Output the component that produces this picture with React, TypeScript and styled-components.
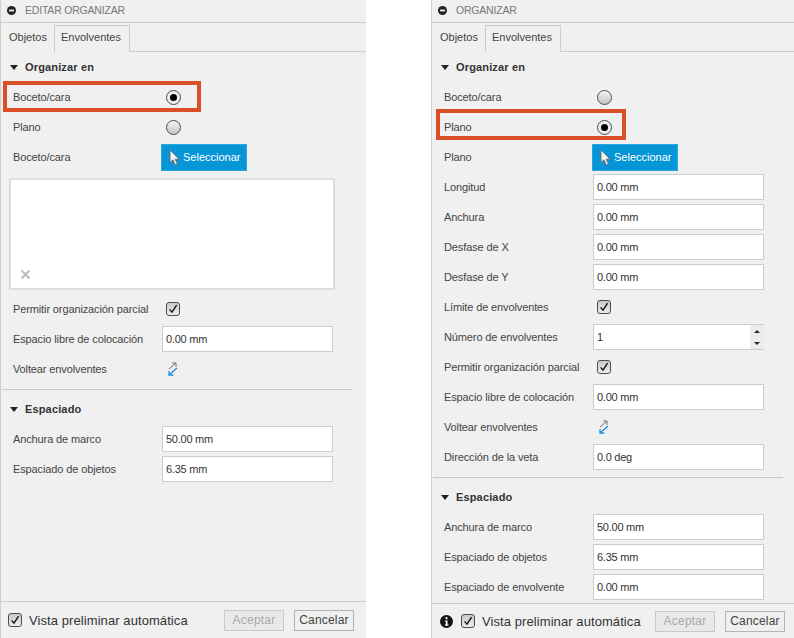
import React from 'react';
import styled, { createGlobalStyle } from 'styled-components';

const GlobalStyle = createGlobalStyle`
  html, body {
    margin: 0;
    height: 100%;
    background: #fff;
    overflow: hidden;
  }
  body {
    font-family: "Liberation Sans", Arial, sans-serif;
    font-size: 11px;
    color: #333;
  }
`;

const Page = styled.div`
  display: flex;
  gap: 65px;
  width: 794px;
  height: 638px;
  overflow: hidden;
`;

const Panel = styled.section`
  position: relative;
  display: flex;
  flex-direction: column;
  flex: 0 0 366px;
  box-sizing: border-box;
  height: 638px;
  background: #f0f0f0;
  border-left: 1px solid #cfcfcf;
`;

const TitleBar = styled.header`
  display: flex;
  align-items: center;
  gap: 9px;
  box-sizing: border-box;
  height: 23px;
  padding: 0 0 2px 6px;
  border-bottom: 1px solid #cdcdcd;
  color: #777;
  font-size: 10.5px;
  letter-spacing: -0.2px;
`;

const TabBar = styled.nav`
  display: flex;
  box-sizing: border-box;
  height: 29px;
  padding-top: 2px;
  border-bottom: 1px solid #cdcdcd;
`;

const Tab = styled.div<{ $active?: boolean }>`
  box-sizing: border-box;
  width: ${(p) => (p.$active ? '76px' : '53px')};
  height: 27px;
  line-height: 22px;
  padding-left: ${(p) => (p.$active ? '6px' : '7px')};
  border: 1px solid ${(p) => (p.$active ? '#cdcdcd' : 'transparent')};
  border-bottom: none;
  background: #f0f0f0;
  color: #444;
  margin-bottom: -1px;
`;

const Body = styled.div`
  display: flex;
  flex-direction: column;
`;

const Heading = styled.div`
  display: flex;
  align-items: center;
  gap: 7px;
  height: 30px;
  padding-left: 9px;
  font-weight: bold;
  color: #333;
  letter-spacing: 0.15px;
`;

const Triangle = styled.span`
  width: 0;
  height: 0;
  border-left: 4.5px solid transparent;
  border-right: 4.5px solid transparent;
  border-top: 5px solid #222;
`;

const Row = styled.div`
  display: flex;
  align-items: center;
  height: 30px;
  padding-left: 12px;
`;

const Label = styled.label`
  flex: 0 0 149px;
  color: #444;
  letter-spacing: -0.12px;
`;

const Radio = styled.span<{ $on?: boolean }>`
  box-sizing: border-box;
  display: flex;
  align-items: center;
  justify-content: center;
  width: 15px;
  height: 15px;
  margin-left: 4px;
  border-radius: 50%;
  border: ${(p) => (p.$on ? '1.5px' : '1px')} solid #4d4d4d;
  background: ${(p) => (p.$on ? '#eeeeee' : 'linear-gradient(#f5f5f5, #c4c4c4)')};

  &::after {
    content: '';
    display: ${(p) => (p.$on ? 'block' : 'none')};
    width: 7px;
    height: 7px;
    border-radius: 50%;
    background: #000;
  }
`;

const CheckBox = styled.span<{ $inset?: number }>`
  display: flex;
  flex: 0 0 auto;
  box-sizing: border-box;
  width: 14px;
  height: 14px;
  margin-left: ${(p) => p.$inset ?? 0}px;
  border: 1px solid #4d4d4d;
  border-radius: 3px;
  background: linear-gradient(#c8c8c8, #ededed);

  svg {
    width: 12px;
    height: 12px;
  }
`;

const SelectButton = styled.button`
  display: flex;
  align-items: center;
  gap: 3px;
  box-sizing: border-box;
  width: 86px;
  height: 27px;
  margin-left: -1px;
  padding: 0 0 0 7px;
  border: 1px solid #2aa6e0;
  background: #0696d7;
  color: #fff;
  font: inherit;
`;

const Field = styled.div`
  position: relative;
  display: flex;
  align-items: center;
  box-sizing: border-box;
  width: 171px;
  height: 26px;
  padding-left: 3px;
  background: #fff;
  border: 1px solid #ccc;
  color: #333;
  letter-spacing: -0.25px;
`;

const Spinner = styled.div`
  position: absolute;
  top: 0;
  right: -1px;
  bottom: 0;
  display: flex;
  flex-direction: column;
  width: 14px;
  background: #ececec;
`;

const SpinStep = styled.span<{ $down?: boolean }>`
  flex: 1;
  display: flex;
  align-items: center;
  justify-content: center;

  &::after {
    content: '';
    border-left: 3px solid transparent;
    border-right: 3px solid transparent;
    ${(p) => (p.$down ? 'border-top: 3px solid #222;' : 'border-bottom: 3px solid #222;')}
  }
`;

const SelectionBox = styled.div`
  position: relative;
  box-sizing: border-box;
  width: 326px;
  height: 112px;
  margin: 6px 0 4px 8px;
  background: #fff;
  border: 2px solid #dedede;
`;

const ClearMark = styled.svg`
  position: absolute;
  left: 9px;
  bottom: 8px;
  width: 11px;
  height: 11px;
`;

const Divider = styled.hr`
  width: 350px;
  height: 0;
  margin: 5px 0 4px 1px;
  border: none;
  border-top: 1px solid #c8c8c8;
`;

const Footer = styled.footer<{ $height: number }>`
  display: flex;
  align-items: center;
  box-sizing: border-box;
  height: ${(p) => p.$height}px;
  margin-top: auto;
  padding: 0 12px 0 7px;
  border-top: 1px solid #cdcdcd;
`;

const FooterLabel = styled.span`
  margin-left: 7px;
  font-size: 13px;
  color: #333;
  letter-spacing: 0.08px;
`;

const FooterButton = styled.button<{ $disabled?: boolean }>`
  width: 60px;
  height: 21px;
  margin-left: ${(p) => (p.$disabled ? 'auto' : '10px')};
  padding: 0;
  background: ${(p) => (p.$disabled ? '#e9e9e9' : '#efefef')};
  border: 1px solid ${(p) => (p.$disabled ? '#c9c9c9' : '#b4b4b4')};
  color: ${(p) => (p.$disabled ? '#aaa' : '#444')};
  font-family: inherit;
  font-size: 12px;
  letter-spacing: 0.2px;
`;

const InfoIcon = styled.svg`
  flex: 0 0 auto;
  width: 13px;
  height: 13px;
  margin: 0 8px 0 1px;
`;

const FlipHolder = styled.span`
  display: flex;
  margin-left: 5px;
`;

const Highlight = styled.div<{ $left: number; $top: number; $width: number }>`
  position: absolute;
  left: ${(p) => p.$left}px;
  top: ${(p) => p.$top}px;
  width: ${(p) => p.$width}px;
  height: 31px;
  box-sizing: border-box;
  border: 4px solid #d94f26;
  pointer-events: none;
`;

const Check = () => (
  <svg viewBox="0 0 12 12">
    <path d="M2.6 6.4 5 9.2 9.6 2.2" fill="none" stroke="#111" strokeWidth="1.4" />
  </svg>
);

const Collapse = () => (
  <svg width="9" height="9" viewBox="0 0 9 9">
    <circle cx="4.5" cy="4.5" r="4.5" fill="#222" />
    <rect x="2" y="3.6" width="5" height="1.8" fill="#f0f0f0" />
  </svg>
);

const Pointer = () => (
  <svg width="11" height="17" viewBox="0 0 11 17">
    <path d="M1 1v12.5l3-2.7L6.2 16l2.2-1-2.2-4.8H10z" fill="#f4f4f4" stroke="#6a6a6a" strokeWidth="0.9" />
  </svg>
);

const FlipIcon = () => (
  <svg width="11" height="14" viewBox="0 0 11 14">
    <path d="M2 7 8.6 1.4M5.2 1H9v3.8" fill="none" stroke="#6e6e6e" strokeWidth="1" />
    <path d="M10 6 2.6 12.6M2 9v4h4.4" fill="none" stroke="#1c8fe0" strokeWidth="1.3" />
  </svg>
);

const TextRow = ({ label, value, spinner }: { label: string; value: string; spinner?: boolean }) => (
  <Row>
    <Label>{label}</Label>
    <Field>
      {value}
      {spinner && (
        <Spinner>
          <SpinStep />
          <SpinStep $down />
        </Spinner>
      )}
    </Field>
  </Row>
);

const RadioRow = ({ label, on }: { label: string; on?: boolean }) => (
  <Row>
    <Label>{label}</Label>
    <Radio $on={on} />
  </Row>
);

const CheckRow = ({ label }: { label: string }) => (
  <Row>
    <Label>{label}</Label>
    <CheckBox $inset={4}>
      <Check />
    </CheckBox>
  </Row>
);

const SelectRow = ({ label }: { label: string }) => (
  <Row>
    <Label>{label}</Label>
    <SelectButton>
      <Pointer />
      Seleccionar
    </SelectButton>
  </Row>
);

const FlipRow = () => (
  <Row>
    <Label>Voltear envolventes</Label>
    <FlipHolder>
      <FlipIcon />
    </FlipHolder>
  </Row>
);

const PanelTop = ({ title }: { title: string }) => (
  <>
    <TitleBar>
      <Collapse />
      {title}
    </TitleBar>
    <TabBar>
      <Tab>Objetos</Tab>
      <Tab $active>Envolventes</Tab>
    </TabBar>
  </>
);

const PanelFooter = ({ info, height }: { info?: boolean; height: number }) => (
  <Footer $height={height}>
    {info && (
      <InfoIcon viewBox="0 0 13 13">
        <circle cx="6.5" cy="6.5" r="6.5" fill="#111" />
        <rect x="5.5" y="2.2" width="2" height="2" fill="#fff" />
        <path d="M4.8 5.4h2.7v4.2h1v1.1H4.8V9.6h1V6.5h-1z" fill="#fff" />
      </InfoIcon>
    )}
    <CheckBox>
      <Check />
    </CheckBox>
    <FooterLabel>Vista preliminar automática</FooterLabel>
    <FooterButton $disabled>Aceptar</FooterButton>
    <FooterButton>Cancelar</FooterButton>
  </Footer>
);

export default function App() {
  return (
    <>
      <GlobalStyle />
      <Page>
        <Panel>
          <PanelTop title="EDITAR ORGANIZAR" />
          <Body>
            <Heading>
              <Triangle />
              Organizar en
            </Heading>
            <RadioRow label="Boceto/cara" on />
            <RadioRow label="Plano" />
            <SelectRow label="Boceto/cara" />
            <SelectionBox>
              <ClearMark viewBox="0 0 11 11">
                <path d="M1.5 1.5l8 8M9.5 1.5l-8 8" stroke="#bdbdbd" strokeWidth="2" />
              </ClearMark>
            </SelectionBox>
            <CheckRow label="Permitir organización parcial" />
            <TextRow label="Espacio libre de colocación" value="0.00 mm" />
            <FlipRow />
            <Divider />
            <Heading>
              <Triangle />
              Espaciado
            </Heading>
            <TextRow label="Anchura de marco" value="50.00 mm" />
            <TextRow label="Espaciado de objetos" value="6.35 mm" />
          </Body>
          <PanelFooter height={37} />
          <Highlight $left={2} $top={81} $width={198} />
        </Panel>
        <Panel>
          <PanelTop title="ORGANIZAR" />
          <Body>
            <Heading>
              <Triangle />
              Organizar en
            </Heading>
            <RadioRow label="Boceto/cara" />
            <RadioRow label="Plano" on />
            <SelectRow label="Plano" />
            <TextRow label="Longitud" value="0.00 mm" />
            <TextRow label="Anchura" value="0.00 mm" />
            <TextRow label="Desfase de X" value="0.00 mm" />
            <TextRow label="Desfase de Y" value="0.00 mm" />
            <CheckRow label="Límite de envolventes" />
            <TextRow label="Número de envolventes" value="1" spinner />
            <CheckRow label="Permitir organización parcial" />
            <TextRow label="Espacio libre de colocación" value="0.00 mm" />
            <FlipRow />
            <TextRow label="Dirección de la veta" value="0.0 deg" />
            <Divider />
            <Heading>
              <Triangle />
              Espaciado
            </Heading>
            <TextRow label="Anchura de marco" value="50.00 mm" />
            <TextRow label="Espaciado de objetos" value="6.35 mm" />
            <TextRow label="Espaciado de envolvente" value="0.00 mm" />
          </Body>
          <PanelFooter info height={35} />
          <Highlight $left={4} $top={109} $width={190} />
        </Panel>
      </Page>
    </>
  );
}
